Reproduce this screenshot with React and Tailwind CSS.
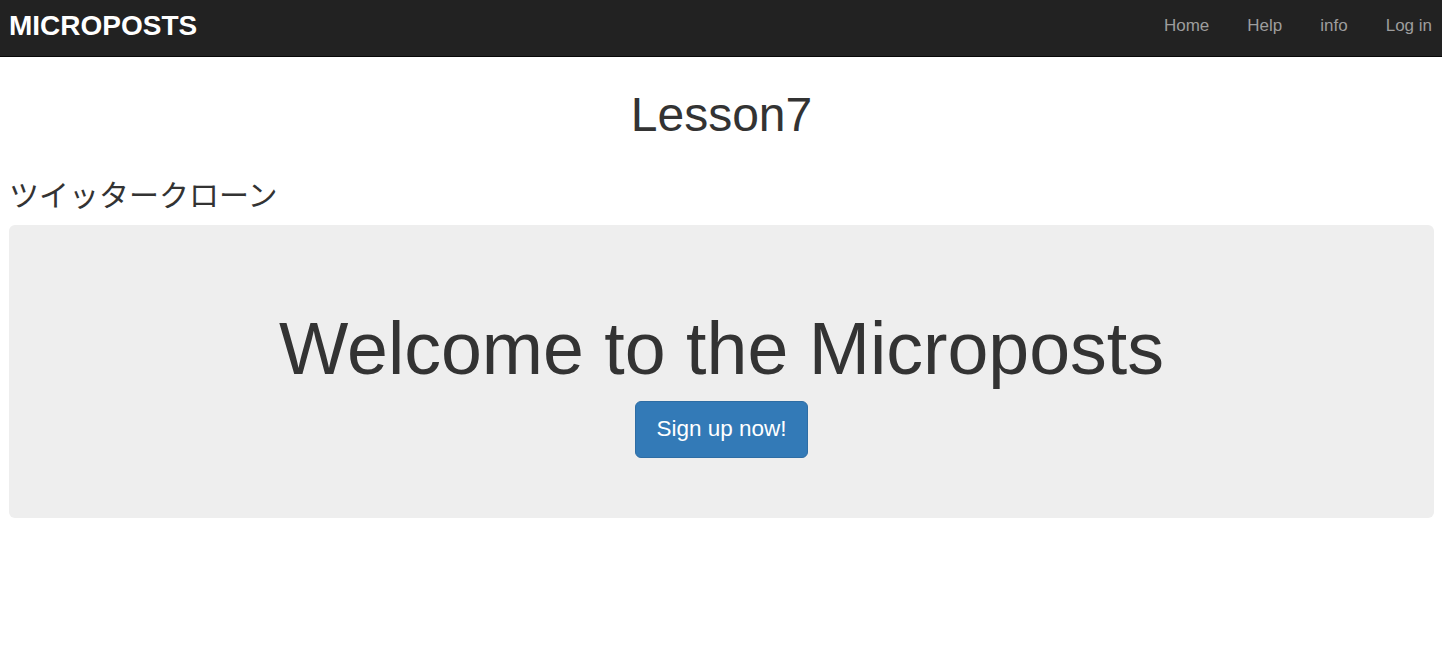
export default function App() {
  return (
    <div className="min-h-[653px] bg-white" style={{ fontFamily: '"Liberation Sans", Arial, sans-serif' }}>
      <nav className="h-[57px] bg-[#222222] border-b border-[#080808] flex items-center justify-between pl-[9px] pr-[9px]">
        <a className="text-white font-bold text-[28px] leading-none -mt-[5px]" href="#">MICROPOSTS</a>
        <ul className="flex items-center gap-[38px] text-[17px] text-[#9d9d9d] -mt-[5px] mr-[1px]">
          <li>Home</li>
          <li>Help</li>
          <li>info</li>
          <li>Log in</li>
        </ul>
      </nav>
      <div className="px-[9px] pr-[8px]">
        <h1 className="mt-[32px] text-center text-[48px] leading-[1.1] text-[#333333]">Lesson7</h1>
        <h3 className="mt-[37px] text-[30px] leading-[1.1] text-[#333333]" style={{ fontFamily: '"Liberation Sans", "Noto Sans CJK JP", sans-serif' }}>ツイッタークローン</h3>
        <div className="mt-[13px] bg-[#eeeeee] rounded-[6px] pt-[84px] pb-[60px] flex flex-col items-center">
          <h1 className="text-[73.5px] leading-[1.1] text-[#333333]">Welcome to the Microposts</h1>
          <button className="mt-[11px] h-[57px] px-[20px] bg-[#337ab7] border border-[#2e6da4] rounded-[6px] text-white text-[22.5px]">Sign up now!</button>
        </div>
      </div>
    </div>
  );
}
